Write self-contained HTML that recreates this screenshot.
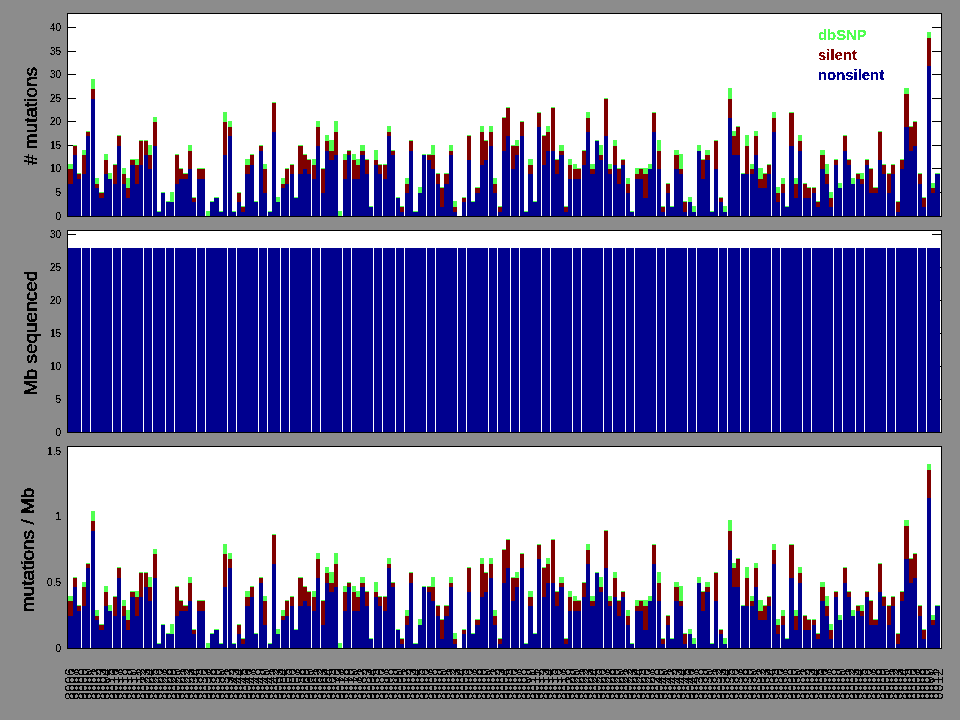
<!DOCTYPE html><html><head><meta charset="utf-8"><title>mutation rates</title><style>

html,body{margin:0;padding:0}
body{width:960px;height:720px;overflow:hidden;background:#8c8c8c;position:relative;font-family:"Liberation Sans",sans-serif;color:#000}
.yl{filter:url(#th)}
.lg{filter:url(#th3)}
.yt{filter:url(#th3)}
.xl span{filter:url(#th2)}
.yt{position:absolute;right:899px;font-size:10px;line-height:10px;height:10px;white-space:nowrap;text-align:right}
.yl{position:absolute;left:0;top:0;font-size:19px;line-height:19px;-webkit-text-stroke:0.15px #000;white-space:nowrap;transform-origin:0 0}
.lg{position:absolute;left:818px;font-size:15.5px;font-weight:bold;line-height:14px;white-space:nowrap;transform-origin:0 0;transform:scaleX(0.96)}
.xl{position:absolute;left:0;top:0;width:960px;height:720px}
.xl span{position:absolute;top:700px;font-size:14px;line-height:14px;height:14px;letter-spacing:0.213px;white-space:nowrap;transform-origin:0 0;transform:rotate(-90deg)}

</style></head><body>
<svg width="0" height="0" style="position:absolute"><filter id="th" x="-50%" y="-50%" width="200%" height="200%" color-interpolation-filters="sRGB"><feComponentTransfer><feFuncA type="discrete" tableValues="0 1 1"/></feComponentTransfer></filter><filter id="th2" x="-50%" y="-50%" width="200%" height="200%" color-interpolation-filters="sRGB"><feComponentTransfer><feFuncA type="discrete" tableValues="0 1"/></feComponentTransfer></filter><filter id="th3" x="-50%" y="-50%" width="200%" height="200%" color-interpolation-filters="sRGB"><feComponentTransfer><feFuncA type="discrete" tableValues="0 0 1 1 1"/></feComponentTransfer></filter></svg>
<svg width="960" height="720" viewBox="0 0 960 720" shape-rendering="crispEdges" style="position:absolute;left:0;top:0">
<rect x="67" y="13" width="875" height="204" fill="#fff"/>
<rect x="67" y="230" width="875" height="203" fill="#fff"/>
<rect x="67" y="446" width="875" height="203" fill="#fff"/>
<path fill="#000" d="M68 192h8v1h-8zM932 192h9v1h-9zM68 168h8v1h-8zM932 168h9v1h-9zM68 145h8v1h-8zM932 145h9v1h-9zM68 121h8v1h-8zM932 121h9v1h-9zM68 98h8v1h-8zM932 98h9v1h-9zM68 74h8v1h-8zM932 74h9v1h-9zM68 51h8v1h-8zM932 51h9v1h-9zM68 27h8v1h-8zM932 27h9v1h-9zM68 399h8v1h-8zM932 399h9v1h-9zM68 366h8v1h-8zM932 366h9v1h-9zM68 333h8v1h-8zM932 333h9v1h-9zM68 300h8v1h-8zM932 300h9v1h-9zM68 267h8v1h-8zM932 267h9v1h-9zM68 234h8v1h-8zM932 234h9v1h-9z"/>
<path fill="#00008f" d="M68 184h5v32h-5zM73 155h4v61h-4zM77 179h4v37h-4zM82 174h4v42h-4zM86 136h4v80h-4zM91 99h4v117h-4zM95 188h4v28h-4zM99 198h5v18h-5zM104 174h4v42h-4zM108 179h4v37h-4zM113 184h4v32h-4zM117 146h4v70h-4zM122 184h4v32h-4zM126 198h4v18h-4zM130 165h5v51h-5zM135 184h4v32h-4zM139 165h4v51h-4zM144 155h4v61h-4zM148 169h4v47h-4zM153 146h4v70h-4zM157 212h4v4h-4zM161 193h4v23h-4zM166 202h4v14h-4zM170 202h4v14h-4zM175 184h4v32h-4zM179 179h4v37h-4zM183 179h5v37h-5zM188 169h4v47h-4zM192 202h4v14h-4zM197 179h4v37h-4zM201 179h4v37h-4zM210 202h4v14h-4zM214 198h5v18h-5zM219 212h4v4h-4zM223 155h4v61h-4zM228 136h4v80h-4zM232 212h4v4h-4zM237 202h4v14h-4zM241 212h4v4h-4zM245 174h5v42h-5zM250 165h4v51h-4zM254 202h4v14h-4zM259 151h4v65h-4zM263 193h4v23h-4zM268 212h4v4h-4zM272 132h4v84h-4zM276 202h4v14h-4zM281 188h4v28h-4zM285 184h4v32h-4zM290 174h4v42h-4zM294 198h4v18h-4zM298 174h5v42h-5zM303 169h4v47h-4zM307 174h4v42h-4zM312 179h4v37h-4zM316 146h4v70h-4zM321 193h4v23h-4zM325 151h4v65h-4zM329 160h5v56h-5zM334 155h4v61h-4zM343 179h4v37h-4zM347 155h4v61h-4zM352 179h4v37h-4zM356 179h4v37h-4zM360 155h5v61h-5zM365 174h4v42h-4zM369 207h4v9h-4zM374 165h4v51h-4zM378 174h4v42h-4zM383 179h4v37h-4zM387 136h4v80h-4zM391 155h4v61h-4zM396 198h4v18h-4zM400 212h4v4h-4zM405 193h4v23h-4zM409 151h4v65h-4zM413 212h5v4h-5zM418 193h4v23h-4zM422 155h4v61h-4zM427 160h4v56h-4zM431 169h4v47h-4zM436 184h4v32h-4zM440 207h4v9h-4zM444 184h5v32h-5zM449 155h4v61h-4zM453 212h4v4h-4zM462 202h4v14h-4zM467 160h4v56h-4zM471 202h4v14h-4zM475 193h5v23h-5zM480 165h4v51h-4zM484 160h4v56h-4zM489 146h4v70h-4zM493 193h4v23h-4zM498 212h4v4h-4zM502 151h4v65h-4zM506 136h4v80h-4zM511 169h4v47h-4zM515 155h4v61h-4zM520 136h4v80h-4zM524 212h4v4h-4zM528 174h5v42h-5zM533 202h4v14h-4zM537 127h4v89h-4zM542 165h4v51h-4zM546 151h4v65h-4zM551 151h4v65h-4zM555 174h4v42h-4zM559 155h5v61h-5zM564 212h4v4h-4zM568 179h4v37h-4zM573 179h4v37h-4zM577 179h4v37h-4zM582 165h4v51h-4zM586 132h4v84h-4zM590 174h5v42h-5zM595 141h4v75h-4zM599 160h4v56h-4zM604 136h4v80h-4zM608 174h4v42h-4zM613 165h4v51h-4zM617 184h4v32h-4zM621 165h4v51h-4zM626 193h4v23h-4zM630 212h4v4h-4zM635 179h4v37h-4zM639 179h4v37h-4zM643 198h5v18h-5zM648 169h4v47h-4zM652 132h4v84h-4zM657 169h4v47h-4zM661 212h4v4h-4zM666 193h4v23h-4zM670 207h4v9h-4zM674 169h5v47h-5zM679 174h4v42h-4zM683 212h4v4h-4zM688 202h4v14h-4zM692 212h4v4h-4zM697 151h4v65h-4zM701 179h4v37h-4zM705 160h5v56h-5zM710 212h4v4h-4zM714 169h4v47h-4zM719 202h4v14h-4zM723 212h4v4h-4zM728 118h4v98h-4zM732 155h4v61h-4zM736 155h4v61h-4zM741 174h4v42h-4zM745 174h4v42h-4zM750 174h4v42h-4zM754 155h4v61h-4zM758 188h5v28h-5zM763 188h4v28h-4zM767 174h4v42h-4zM772 132h4v84h-4zM776 202h4v14h-4zM781 193h4v23h-4zM785 207h4v9h-4zM789 146h5v70h-5zM794 198h4v18h-4zM798 151h4v65h-4zM803 198h4v18h-4zM807 198h4v18h-4zM812 193h4v23h-4zM816 207h4v9h-4zM820 169h5v47h-5zM825 184h4v32h-4zM829 207h4v9h-4zM834 165h4v51h-4zM838 188h4v28h-4zM843 151h4v65h-4zM847 165h4v51h-4zM851 184h4v32h-4zM856 179h4v37h-4zM860 184h4v32h-4zM865 165h4v51h-4zM869 193h4v23h-4zM873 193h5v23h-5zM878 160h4v56h-4zM882 174h4v42h-4zM887 193h4v23h-4zM891 174h4v42h-4zM896 212h4v4h-4zM900 169h4v47h-4zM904 127h5v89h-5zM909 151h4v65h-4zM913 146h4v70h-4zM918 184h4v32h-4zM922 207h4v9h-4zM927 66h4v150h-4zM931 193h4v23h-4zM935 174h5v42h-5z"/>
<path fill="#800000" d="M68 169h5v15h-5zM73 146h4v9h-4zM77 174h4v5h-4zM82 155h4v19h-4zM86 132h4v4h-4zM91 89h4v10h-4zM95 184h4v4h-4zM99 193h5v5h-5zM104 160h4v14h-4zM113 165h4v19h-4zM117 136h4v10h-4zM122 174h4v10h-4zM126 188h4v10h-4zM130 160h5v5h-5zM135 165h4v19h-4zM139 141h4v24h-4zM144 141h4v14h-4zM148 155h4v14h-4zM153 122h4v24h-4zM175 155h4v29h-4zM179 169h4v10h-4zM183 174h5v5h-5zM188 151h4v18h-4zM192 198h4v4h-4zM197 169h4v10h-4zM201 169h4v10h-4zM223 122h4v33h-4zM228 127h4v9h-4zM237 193h4v9h-4zM241 207h4v5h-4zM245 165h5v9h-5zM250 155h4v10h-4zM259 146h4v5h-4zM263 169h4v24h-4zM272 103h4v29h-4zM281 184h4v4h-4zM285 169h4v15h-4zM290 165h4v9h-4zM298 146h5v28h-5zM303 155h4v14h-4zM307 160h4v14h-4zM312 165h4v14h-4zM316 127h4v19h-4zM321 169h4v24h-4zM325 141h4v10h-4zM329 151h5v9h-5zM334 132h4v23h-4zM343 160h4v19h-4zM347 151h4v4h-4zM352 160h4v19h-4zM356 165h4v14h-4zM360 151h5v4h-5zM365 160h4v14h-4zM374 160h4v5h-4zM378 165h4v9h-4zM383 165h4v14h-4zM387 132h4v4h-4zM391 151h4v4h-4zM400 207h4v5h-4zM405 184h4v9h-4zM409 141h4v10h-4zM427 155h4v5h-4zM431 155h4v14h-4zM436 174h4v10h-4zM440 188h4v19h-4zM444 174h5v10h-5zM449 151h4v4h-4zM453 207h4v5h-4zM462 198h4v4h-4zM467 136h4v24h-4zM475 188h5v5h-5zM480 132h4v33h-4zM484 141h4v19h-4zM489 132h4v14h-4zM493 184h4v9h-4zM498 207h4v5h-4zM502 118h4v33h-4zM506 108h4v28h-4zM511 146h4v23h-4zM515 146h4v9h-4zM520 122h4v14h-4zM528 165h5v9h-5zM537 113h4v14h-4zM542 136h4v29h-4zM546 132h4v19h-4zM551 108h4v43h-4zM555 160h4v14h-4zM559 151h5v4h-5zM564 207h4v5h-4zM568 165h4v14h-4zM573 169h4v10h-4zM577 169h4v10h-4zM582 151h4v14h-4zM586 118h4v14h-4zM590 169h5v5h-5zM599 155h4v5h-4zM604 99h4v37h-4zM608 169h4v5h-4zM613 146h4v19h-4zM617 169h4v15h-4zM621 160h4v5h-4zM626 184h4v9h-4zM635 174h4v5h-4zM639 169h4v10h-4zM643 174h5v24h-5zM652 113h4v19h-4zM657 151h4v18h-4zM661 207h4v5h-4zM666 184h4v9h-4zM674 155h5v14h-5zM679 169h4v5h-4zM683 202h4v10h-4zM701 160h4v19h-4zM705 155h5v5h-5zM714 141h4v28h-4zM719 198h4v4h-4zM728 99h4v19h-4zM732 136h4v19h-4zM736 127h4v28h-4zM745 146h4v28h-4zM750 169h4v5h-4zM754 136h4v19h-4zM758 179h5v9h-5zM763 174h4v14h-4zM767 165h4v9h-4zM772 118h4v14h-4zM776 193h4v9h-4zM781 184h4v9h-4zM789 113h5v33h-5zM794 184h4v14h-4zM798 141h4v10h-4zM803 184h4v14h-4zM807 188h4v10h-4zM812 188h4v5h-4zM816 202h4v5h-4zM820 155h5v14h-5zM825 174h4v10h-4zM829 198h4v9h-4zM834 160h4v5h-4zM843 136h4v15h-4zM847 160h4v5h-4zM856 174h4v5h-4zM860 179h4v5h-4zM865 160h4v5h-4zM869 169h4v24h-4zM873 188h5v5h-5zM878 132h4v28h-4zM882 165h4v9h-4zM887 174h4v19h-4zM891 165h4v9h-4zM896 202h4v10h-4zM900 160h4v9h-4zM904 94h5v33h-5zM909 127h4v24h-4zM913 122h4v24h-4zM918 174h4v10h-4zM922 198h4v9h-4zM927 38h4v28h-4zM931 188h4v5h-4z"/>
<path fill="#50ff50" d="M68 164h5v5h-5zM73 145h4v1h-4zM77 173h4v1h-4zM82 150h4v5h-4zM86 131h4v1h-4zM91 79h4v10h-4zM95 178h4v6h-4zM99 192h5v1h-5zM104 154h4v6h-4zM108 173h4v6h-4zM113 164h4v1h-4zM117 135h4v1h-4zM122 168h4v6h-4zM126 178h4v10h-4zM130 159h5v1h-5zM135 159h4v6h-4zM139 140h4v1h-4zM144 140h4v1h-4zM148 145h4v10h-4zM153 117h4v5h-4zM157 211h4v1h-4zM161 192h4v1h-4zM166 201h4v1h-4zM170 192h4v10h-4zM175 154h4v1h-4zM179 168h4v1h-4zM183 173h5v1h-5zM188 145h4v6h-4zM192 197h4v1h-4zM197 168h4v1h-4zM201 168h4v1h-4zM206 211h4v5h-4zM210 201h4v1h-4zM214 197h5v1h-5zM219 211h4v1h-4zM223 112h4v10h-4zM228 121h4v6h-4zM232 211h4v1h-4zM237 192h4v1h-4zM241 206h4v1h-4zM245 159h5v6h-5zM250 154h4v1h-4zM254 201h4v1h-4zM259 145h4v1h-4zM263 164h4v5h-4zM268 211h4v1h-4zM272 102h4v1h-4zM276 197h4v5h-4zM281 178h4v6h-4zM285 168h4v1h-4zM290 164h4v1h-4zM294 197h4v1h-4zM298 145h5v1h-5zM303 154h4v1h-4zM307 159h4v1h-4zM312 159h4v6h-4zM316 121h4v6h-4zM321 168h4v1h-4zM325 135h4v6h-4zM329 140h5v11h-5zM334 121h4v11h-4zM338 211h4v5h-4zM343 154h4v6h-4zM347 150h4v1h-4zM352 154h4v6h-4zM356 159h4v6h-4zM360 145h5v6h-5zM365 159h4v1h-4zM369 206h4v1h-4zM374 150h4v10h-4zM378 164h4v1h-4zM383 164h4v1h-4zM387 126h4v6h-4zM391 150h4v1h-4zM396 197h4v1h-4zM400 206h4v1h-4zM405 178h4v6h-4zM409 140h4v1h-4zM413 211h5v1h-5zM418 187h4v6h-4zM422 154h4v1h-4zM427 154h4v1h-4zM431 145h4v10h-4zM436 173h4v1h-4zM440 187h4v1h-4zM444 173h5v1h-5zM449 145h4v6h-4zM453 201h4v6h-4zM462 197h4v1h-4zM467 135h4v1h-4zM471 201h4v1h-4zM475 187h5v1h-5zM480 126h4v6h-4zM484 140h4v1h-4zM489 126h4v6h-4zM493 178h4v6h-4zM498 206h4v1h-4zM502 117h4v1h-4zM506 107h4v1h-4zM511 145h4v1h-4zM515 140h4v6h-4zM520 121h4v1h-4zM524 211h4v1h-4zM528 159h5v6h-5zM533 201h4v1h-4zM537 112h4v1h-4zM542 135h4v1h-4zM546 126h4v6h-4zM551 107h4v1h-4zM555 159h4v1h-4zM559 145h5v6h-5zM564 206h4v1h-4zM568 159h4v6h-4zM573 164h4v5h-4zM577 168h4v1h-4zM582 150h4v1h-4zM586 112h4v6h-4zM590 164h5v5h-5zM595 140h4v1h-4zM599 145h4v10h-4zM604 98h4v1h-4zM608 164h4v5h-4zM613 140h4v6h-4zM617 168h4v1h-4zM621 159h4v1h-4zM626 178h4v6h-4zM630 211h4v1h-4zM635 168h4v6h-4zM639 168h4v1h-4zM643 168h5v6h-5zM648 164h4v5h-4zM652 112h4v1h-4zM657 140h4v11h-4zM661 206h4v1h-4zM666 183h4v1h-4zM670 206h4v1h-4zM674 150h5v5h-5zM679 154h4v15h-4zM683 201h4v1h-4zM688 197h4v5h-4zM692 206h4v6h-4zM697 145h4v6h-4zM701 159h4v1h-4zM705 150h5v5h-5zM710 211h4v1h-4zM714 140h4v1h-4zM719 197h4v1h-4zM723 206h4v6h-4zM728 88h4v11h-4zM732 131h4v5h-4zM736 126h4v1h-4zM741 173h4v1h-4zM745 135h4v11h-4zM750 164h4v5h-4zM754 131h4v5h-4zM758 168h5v11h-5zM763 173h4v1h-4zM767 164h4v1h-4zM772 112h4v6h-4zM776 187h4v6h-4zM781 178h4v6h-4zM785 206h4v1h-4zM789 112h5v1h-5zM794 178h4v6h-4zM798 135h4v6h-4zM803 183h4v1h-4zM807 187h4v1h-4zM812 187h4v1h-4zM816 201h4v1h-4zM820 150h5v5h-5zM825 164h4v10h-4zM829 192h4v6h-4zM834 159h4v1h-4zM838 183h4v5h-4zM843 135h4v1h-4zM847 159h4v1h-4zM851 178h4v6h-4zM856 173h4v1h-4zM860 173h4v6h-4zM865 159h4v1h-4zM869 168h4v1h-4zM873 187h5v1h-5zM878 131h4v1h-4zM882 164h4v1h-4zM887 173h4v1h-4zM891 164h4v1h-4zM896 201h4v1h-4zM900 159h4v1h-4zM904 88h5v6h-5zM909 126h4v1h-4zM913 121h4v1h-4zM918 173h4v1h-4zM922 197h4v1h-4zM927 32h4v6h-4zM931 183h4v5h-4zM935 173h5v1h-5z"/>
<path fill="#00008f" d="M68 616h5v32h-5zM73 587h4v61h-4zM77 611h4v37h-4zM82 606h4v42h-4zM86 568h4v80h-4zM91 531h4v117h-4zM95 620h4v28h-4zM99 630h5v18h-5zM104 606h4v42h-4zM108 611h4v37h-4zM113 616h4v32h-4zM117 578h4v70h-4zM122 616h4v32h-4zM126 630h4v18h-4zM130 597h5v51h-5zM135 616h4v32h-4zM139 597h4v51h-4zM144 587h4v61h-4zM148 601h4v47h-4zM153 578h4v70h-4zM157 644h4v4h-4zM161 625h4v23h-4zM166 634h4v14h-4zM170 634h4v14h-4zM175 616h4v32h-4zM179 611h4v37h-4zM183 611h5v37h-5zM188 601h4v47h-4zM192 634h4v14h-4zM197 611h4v37h-4zM201 611h4v37h-4zM210 634h4v14h-4zM214 630h5v18h-5zM219 644h4v4h-4zM223 587h4v61h-4zM228 568h4v80h-4zM232 644h4v4h-4zM237 634h4v14h-4zM241 644h4v4h-4zM245 606h5v42h-5zM250 597h4v51h-4zM254 634h4v14h-4zM259 583h4v65h-4zM263 625h4v23h-4zM268 644h4v4h-4zM272 564h4v84h-4zM276 634h4v14h-4zM281 620h4v28h-4zM285 616h4v32h-4zM290 606h4v42h-4zM294 630h4v18h-4zM298 606h5v42h-5zM303 601h4v47h-4zM307 606h4v42h-4zM312 611h4v37h-4zM316 578h4v70h-4zM321 625h4v23h-4zM325 583h4v65h-4zM329 592h5v56h-5zM334 587h4v61h-4zM343 611h4v37h-4zM347 587h4v61h-4zM352 611h4v37h-4zM356 611h4v37h-4zM360 587h5v61h-5zM365 606h4v42h-4zM369 639h4v9h-4zM374 597h4v51h-4zM378 606h4v42h-4zM383 611h4v37h-4zM387 568h4v80h-4zM391 587h4v61h-4zM396 630h4v18h-4zM400 644h4v4h-4zM405 625h4v23h-4zM409 583h4v65h-4zM413 644h5v4h-5zM418 625h4v23h-4zM422 587h4v61h-4zM427 592h4v56h-4zM431 601h4v47h-4zM436 616h4v32h-4zM440 639h4v9h-4zM444 616h5v32h-5zM449 587h4v61h-4zM453 644h4v4h-4zM462 634h4v14h-4zM467 592h4v56h-4zM471 634h4v14h-4zM475 625h5v23h-5zM480 597h4v51h-4zM484 592h4v56h-4zM489 578h4v70h-4zM493 625h4v23h-4zM498 644h4v4h-4zM502 583h4v65h-4zM506 568h4v80h-4zM511 601h4v47h-4zM515 587h4v61h-4zM520 568h4v80h-4zM524 644h4v4h-4zM528 606h5v42h-5zM533 634h4v14h-4zM537 559h4v89h-4zM542 597h4v51h-4zM546 583h4v65h-4zM551 583h4v65h-4zM555 606h4v42h-4zM559 587h5v61h-5zM564 644h4v4h-4zM568 611h4v37h-4zM573 611h4v37h-4zM577 611h4v37h-4zM582 597h4v51h-4zM586 564h4v84h-4zM590 606h5v42h-5zM595 573h4v75h-4zM599 592h4v56h-4zM604 568h4v80h-4zM608 606h4v42h-4zM613 597h4v51h-4zM617 616h4v32h-4zM621 597h4v51h-4zM626 625h4v23h-4zM630 644h4v4h-4zM635 611h4v37h-4zM639 611h4v37h-4zM643 630h5v18h-5zM648 601h4v47h-4zM652 564h4v84h-4zM657 601h4v47h-4zM661 644h4v4h-4zM666 625h4v23h-4zM670 639h4v9h-4zM674 601h5v47h-5zM679 606h4v42h-4zM683 644h4v4h-4zM688 634h4v14h-4zM692 644h4v4h-4zM697 583h4v65h-4zM701 611h4v37h-4zM705 592h5v56h-5zM710 644h4v4h-4zM714 601h4v47h-4zM719 634h4v14h-4zM723 644h4v4h-4zM728 550h4v98h-4zM732 587h4v61h-4zM736 587h4v61h-4zM741 606h4v42h-4zM745 606h4v42h-4zM750 606h4v42h-4zM754 587h4v61h-4zM758 620h5v28h-5zM763 620h4v28h-4zM767 606h4v42h-4zM772 564h4v84h-4zM776 634h4v14h-4zM781 625h4v23h-4zM785 639h4v9h-4zM789 578h5v70h-5zM794 630h4v18h-4zM798 583h4v65h-4zM803 630h4v18h-4zM807 630h4v18h-4zM812 625h4v23h-4zM816 639h4v9h-4zM820 601h5v47h-5zM825 616h4v32h-4zM829 639h4v9h-4zM834 597h4v51h-4zM838 620h4v28h-4zM843 583h4v65h-4zM847 597h4v51h-4zM851 616h4v32h-4zM856 611h4v37h-4zM860 616h4v32h-4zM865 597h4v51h-4zM869 625h4v23h-4zM873 625h5v23h-5zM878 592h4v56h-4zM882 606h4v42h-4zM887 625h4v23h-4zM891 606h4v42h-4zM896 644h4v4h-4zM900 601h4v47h-4zM904 559h5v89h-5zM909 583h4v65h-4zM913 578h4v70h-4zM918 616h4v32h-4zM922 639h4v9h-4zM927 498h4v150h-4zM931 625h4v23h-4zM935 606h5v42h-5z"/>
<path fill="#800000" d="M68 601h5v15h-5zM73 578h4v9h-4zM77 606h4v5h-4zM82 587h4v19h-4zM86 564h4v4h-4zM91 521h4v10h-4zM95 616h4v4h-4zM99 625h5v5h-5zM104 592h4v14h-4zM113 597h4v19h-4zM117 568h4v10h-4zM122 606h4v10h-4zM126 620h4v10h-4zM130 592h5v5h-5zM135 597h4v19h-4zM139 573h4v24h-4zM144 573h4v14h-4zM148 587h4v14h-4zM153 554h4v24h-4zM175 587h4v29h-4zM179 601h4v10h-4zM183 606h5v5h-5zM188 583h4v18h-4zM192 630h4v4h-4zM197 601h4v10h-4zM201 601h4v10h-4zM223 554h4v33h-4zM228 559h4v9h-4zM237 625h4v9h-4zM241 639h4v5h-4zM245 597h5v9h-5zM250 587h4v10h-4zM259 578h4v5h-4zM263 601h4v24h-4zM272 535h4v29h-4zM281 616h4v4h-4zM285 601h4v15h-4zM290 597h4v9h-4zM298 578h5v28h-5zM303 587h4v14h-4zM307 592h4v14h-4zM312 597h4v14h-4zM316 559h4v19h-4zM321 601h4v24h-4zM325 573h4v10h-4zM329 583h5v9h-5zM334 564h4v23h-4zM343 592h4v19h-4zM347 583h4v4h-4zM352 592h4v19h-4zM356 597h4v14h-4zM360 583h5v4h-5zM365 592h4v14h-4zM374 592h4v5h-4zM378 597h4v9h-4zM383 597h4v14h-4zM387 564h4v4h-4zM391 583h4v4h-4zM400 639h4v5h-4zM405 616h4v9h-4zM409 573h4v10h-4zM427 587h4v5h-4zM431 587h4v14h-4zM436 606h4v10h-4zM440 620h4v19h-4zM444 606h5v10h-5zM449 583h4v4h-4zM453 639h4v5h-4zM462 630h4v4h-4zM467 568h4v24h-4zM475 620h5v5h-5zM480 564h4v33h-4zM484 573h4v19h-4zM489 564h4v14h-4zM493 616h4v9h-4zM498 639h4v5h-4zM502 550h4v33h-4zM506 540h4v28h-4zM511 578h4v23h-4zM515 578h4v9h-4zM520 554h4v14h-4zM528 597h5v9h-5zM537 545h4v14h-4zM542 568h4v29h-4zM546 564h4v19h-4zM551 540h4v43h-4zM555 592h4v14h-4zM559 583h5v4h-5zM564 639h4v5h-4zM568 597h4v14h-4zM573 601h4v10h-4zM577 601h4v10h-4zM582 583h4v14h-4zM586 550h4v14h-4zM590 601h5v5h-5zM599 587h4v5h-4zM604 531h4v37h-4zM608 601h4v5h-4zM613 578h4v19h-4zM617 601h4v15h-4zM621 592h4v5h-4zM626 616h4v9h-4zM635 606h4v5h-4zM639 601h4v10h-4zM643 606h5v24h-5zM652 545h4v19h-4zM657 583h4v18h-4zM661 639h4v5h-4zM666 616h4v9h-4zM674 587h5v14h-5zM679 601h4v5h-4zM683 634h4v10h-4zM701 592h4v19h-4zM705 587h5v5h-5zM714 573h4v28h-4zM719 630h4v4h-4zM728 531h4v19h-4zM732 568h4v19h-4zM736 559h4v28h-4zM745 578h4v28h-4zM750 601h4v5h-4zM754 568h4v19h-4zM758 611h5v9h-5zM763 606h4v14h-4zM767 597h4v9h-4zM772 550h4v14h-4zM776 625h4v9h-4zM781 616h4v9h-4zM789 545h5v33h-5zM794 616h4v14h-4zM798 573h4v10h-4zM803 616h4v14h-4zM807 620h4v10h-4zM812 620h4v5h-4zM816 634h4v5h-4zM820 587h5v14h-5zM825 606h4v10h-4zM829 630h4v9h-4zM834 592h4v5h-4zM843 568h4v15h-4zM847 592h4v5h-4zM856 606h4v5h-4zM860 611h4v5h-4zM865 592h4v5h-4zM869 601h4v24h-4zM873 620h5v5h-5zM878 564h4v28h-4zM882 597h4v9h-4zM887 606h4v19h-4zM891 597h4v9h-4zM896 634h4v10h-4zM900 592h4v9h-4zM904 526h5v33h-5zM909 559h4v24h-4zM913 554h4v24h-4zM918 606h4v10h-4zM922 630h4v9h-4zM927 470h4v28h-4zM931 620h4v5h-4z"/>
<path fill="#50ff50" d="M68 596h5v5h-5zM73 577h4v1h-4zM77 605h4v1h-4zM82 582h4v5h-4zM86 563h4v1h-4zM91 511h4v10h-4zM95 610h4v6h-4zM99 624h5v1h-5zM104 586h4v6h-4zM108 605h4v6h-4zM113 596h4v1h-4zM117 567h4v1h-4zM122 600h4v6h-4zM126 610h4v10h-4zM130 591h5v1h-5zM135 591h4v6h-4zM139 572h4v1h-4zM144 572h4v1h-4zM148 577h4v10h-4zM153 549h4v5h-4zM157 643h4v1h-4zM161 624h4v1h-4zM166 633h4v1h-4zM170 624h4v10h-4zM175 586h4v1h-4zM179 600h4v1h-4zM183 605h5v1h-5zM188 577h4v6h-4zM192 629h4v1h-4zM197 600h4v1h-4zM201 600h4v1h-4zM206 643h4v5h-4zM210 633h4v1h-4zM214 629h5v1h-5zM219 643h4v1h-4zM223 544h4v10h-4zM228 553h4v6h-4zM232 643h4v1h-4zM237 624h4v1h-4zM241 638h4v1h-4zM245 591h5v6h-5zM250 586h4v1h-4zM254 633h4v1h-4zM259 577h4v1h-4zM263 596h4v5h-4zM268 643h4v1h-4zM272 534h4v1h-4zM276 629h4v5h-4zM281 610h4v6h-4zM285 600h4v1h-4zM290 596h4v1h-4zM294 629h4v1h-4zM298 577h5v1h-5zM303 586h4v1h-4zM307 591h4v1h-4zM312 591h4v6h-4zM316 553h4v6h-4zM321 600h4v1h-4zM325 567h4v6h-4zM329 572h5v11h-5zM334 553h4v11h-4zM338 643h4v5h-4zM343 586h4v6h-4zM347 582h4v1h-4zM352 586h4v6h-4zM356 591h4v6h-4zM360 577h5v6h-5zM365 591h4v1h-4zM369 638h4v1h-4zM374 582h4v10h-4zM378 596h4v1h-4zM383 596h4v1h-4zM387 558h4v6h-4zM391 582h4v1h-4zM396 629h4v1h-4zM400 638h4v1h-4zM405 610h4v6h-4zM409 572h4v1h-4zM413 643h5v1h-5zM418 619h4v6h-4zM422 586h4v1h-4zM427 586h4v1h-4zM431 577h4v10h-4zM436 605h4v1h-4zM440 619h4v1h-4zM444 605h5v1h-5zM449 577h4v6h-4zM453 633h4v6h-4zM462 629h4v1h-4zM467 567h4v1h-4zM471 633h4v1h-4zM475 619h5v1h-5zM480 558h4v6h-4zM484 572h4v1h-4zM489 558h4v6h-4zM493 610h4v6h-4zM498 638h4v1h-4zM502 549h4v1h-4zM506 539h4v1h-4zM511 577h4v1h-4zM515 572h4v6h-4zM520 553h4v1h-4zM524 643h4v1h-4zM528 591h5v6h-5zM533 633h4v1h-4zM537 544h4v1h-4zM542 567h4v1h-4zM546 558h4v6h-4zM551 539h4v1h-4zM555 591h4v1h-4zM559 577h5v6h-5zM564 638h4v1h-4zM568 591h4v6h-4zM573 596h4v5h-4zM577 600h4v1h-4zM582 582h4v1h-4zM586 544h4v6h-4zM590 596h5v5h-5zM595 572h4v1h-4zM599 577h4v10h-4zM604 530h4v1h-4zM608 596h4v5h-4zM613 572h4v6h-4zM617 600h4v1h-4zM621 591h4v1h-4zM626 610h4v6h-4zM630 643h4v1h-4zM635 600h4v6h-4zM639 600h4v1h-4zM643 600h5v6h-5zM648 596h4v5h-4zM652 544h4v1h-4zM657 572h4v11h-4zM661 638h4v1h-4zM666 615h4v1h-4zM670 638h4v1h-4zM674 582h5v5h-5zM679 586h4v15h-4zM683 633h4v1h-4zM688 629h4v5h-4zM692 638h4v6h-4zM697 577h4v6h-4zM701 591h4v1h-4zM705 582h5v5h-5zM710 643h4v1h-4zM714 572h4v1h-4zM719 629h4v1h-4zM723 638h4v6h-4zM728 520h4v11h-4zM732 563h4v5h-4zM736 558h4v1h-4zM741 605h4v1h-4zM745 567h4v11h-4zM750 596h4v5h-4zM754 563h4v5h-4zM758 600h5v11h-5zM763 605h4v1h-4zM767 596h4v1h-4zM772 544h4v6h-4zM776 619h4v6h-4zM781 610h4v6h-4zM785 638h4v1h-4zM789 544h5v1h-5zM794 610h4v6h-4zM798 567h4v6h-4zM803 615h4v1h-4zM807 619h4v1h-4zM812 619h4v1h-4zM816 633h4v1h-4zM820 582h5v5h-5zM825 596h4v10h-4zM829 624h4v6h-4zM834 591h4v1h-4zM838 615h4v5h-4zM843 567h4v1h-4zM847 591h4v1h-4zM851 610h4v6h-4zM856 605h4v1h-4zM860 605h4v6h-4zM865 591h4v1h-4zM869 600h4v1h-4zM873 619h5v1h-5zM878 563h4v1h-4zM882 596h4v1h-4zM887 605h4v1h-4zM891 596h4v1h-4zM896 633h4v1h-4zM900 591h4v1h-4zM904 520h5v6h-5zM909 558h4v1h-4zM913 553h4v1h-4zM918 605h4v1h-4zM922 629h4v1h-4zM927 464h4v6h-4zM931 615h4v5h-4zM935 605h5v1h-5z"/>
<path fill="#00008f" d="M68 248h5v184h-5zM73 248h4v184h-4zM77 248h4v184h-4zM82 248h4v184h-4zM86 248h4v184h-4zM91 248h4v184h-4zM95 248h4v184h-4zM99 248h5v184h-5zM104 248h4v184h-4zM108 248h4v184h-4zM113 248h4v184h-4zM117 248h4v184h-4zM122 248h4v184h-4zM126 248h4v184h-4zM130 248h5v184h-5zM135 248h4v184h-4zM139 248h4v184h-4zM144 248h4v184h-4zM148 248h4v184h-4zM153 248h4v184h-4zM157 248h4v184h-4zM161 248h4v184h-4zM166 248h4v184h-4zM170 248h4v184h-4zM175 248h4v184h-4zM179 248h4v184h-4zM183 248h5v184h-5zM188 248h4v184h-4zM192 248h4v184h-4zM197 248h4v184h-4zM201 248h4v184h-4zM206 248h4v184h-4zM210 248h4v184h-4zM214 248h5v184h-5zM219 248h4v184h-4zM223 248h4v184h-4zM228 248h4v184h-4zM232 248h4v184h-4zM237 248h4v184h-4zM241 248h4v184h-4zM245 248h5v184h-5zM250 248h4v184h-4zM254 248h4v184h-4zM259 248h4v184h-4zM263 248h4v184h-4zM268 248h4v184h-4zM272 248h4v184h-4zM276 248h4v184h-4zM281 248h4v184h-4zM285 248h4v184h-4zM290 248h4v184h-4zM294 248h4v184h-4zM298 248h5v184h-5zM303 248h4v184h-4zM307 248h4v184h-4zM312 248h4v184h-4zM316 248h4v184h-4zM321 248h4v184h-4zM325 248h4v184h-4zM329 248h5v184h-5zM334 248h4v184h-4zM338 248h4v184h-4zM343 248h4v184h-4zM347 248h4v184h-4zM352 248h4v184h-4zM356 248h4v184h-4zM360 248h5v184h-5zM365 248h4v184h-4zM369 248h4v184h-4zM374 248h4v184h-4zM378 248h4v184h-4zM383 248h4v184h-4zM387 248h4v184h-4zM391 248h4v184h-4zM396 248h4v184h-4zM400 248h4v184h-4zM405 248h4v184h-4zM409 248h4v184h-4zM413 248h5v184h-5zM418 248h4v184h-4zM422 248h4v184h-4zM427 248h4v184h-4zM431 248h4v184h-4zM436 248h4v184h-4zM440 248h4v184h-4zM444 248h5v184h-5zM449 248h4v184h-4zM453 248h4v184h-4zM458 248h4v184h-4zM462 248h4v184h-4zM467 248h4v184h-4zM471 248h4v184h-4zM475 248h5v184h-5zM480 248h4v184h-4zM484 248h4v184h-4zM489 248h4v184h-4zM493 248h4v184h-4zM498 248h4v184h-4zM502 248h4v184h-4zM506 248h4v184h-4zM511 248h4v184h-4zM515 248h4v184h-4zM520 248h4v184h-4zM524 248h4v184h-4zM528 248h5v184h-5zM533 248h4v184h-4zM537 248h4v184h-4zM542 248h4v184h-4zM546 248h4v184h-4zM551 248h4v184h-4zM555 248h4v184h-4zM559 248h5v184h-5zM564 248h4v184h-4zM568 248h4v184h-4zM573 248h4v184h-4zM577 248h4v184h-4zM582 248h4v184h-4zM586 248h4v184h-4zM590 248h5v184h-5zM595 248h4v184h-4zM599 248h4v184h-4zM604 248h4v184h-4zM608 248h4v184h-4zM613 248h4v184h-4zM617 248h4v184h-4zM621 248h4v184h-4zM626 248h4v184h-4zM630 248h4v184h-4zM635 248h4v184h-4zM639 248h4v184h-4zM643 248h5v184h-5zM648 248h4v184h-4zM652 248h4v184h-4zM657 248h4v184h-4zM661 248h4v184h-4zM666 248h4v184h-4zM670 248h4v184h-4zM674 248h5v184h-5zM679 248h4v184h-4zM683 248h4v184h-4zM688 248h4v184h-4zM692 248h4v184h-4zM697 248h4v184h-4zM701 248h4v184h-4zM705 248h5v184h-5zM710 248h4v184h-4zM714 248h4v184h-4zM719 248h4v184h-4zM723 248h4v184h-4zM728 248h4v184h-4zM732 248h4v184h-4zM736 248h4v184h-4zM741 248h4v184h-4zM745 248h4v184h-4zM750 248h4v184h-4zM754 248h4v184h-4zM758 248h5v184h-5zM763 248h4v184h-4zM767 248h4v184h-4zM772 248h4v184h-4zM776 248h4v184h-4zM781 248h4v184h-4zM785 248h4v184h-4zM789 248h5v184h-5zM794 248h4v184h-4zM798 248h4v184h-4zM803 248h4v184h-4zM807 248h4v184h-4zM812 248h4v184h-4zM816 248h4v184h-4zM820 248h5v184h-5zM825 248h4v184h-4zM829 248h4v184h-4zM834 248h4v184h-4zM838 248h4v184h-4zM843 248h4v184h-4zM847 248h4v184h-4zM851 248h4v184h-4zM856 248h4v184h-4zM860 248h4v184h-4zM865 248h4v184h-4zM869 248h4v184h-4zM873 248h5v184h-5zM878 248h4v184h-4zM882 248h4v184h-4zM887 248h4v184h-4zM891 248h4v184h-4zM896 248h4v184h-4zM900 248h4v184h-4zM904 248h5v184h-5zM909 248h4v184h-4zM913 248h4v184h-4zM918 248h4v184h-4zM922 248h4v184h-4zM927 248h4v184h-4zM931 248h4v184h-4zM935 248h5v184h-5z"/>
<path fill="#000" d="M67 13h875v1h-875z M67 216h875v1h-875z M67 13h1v204h-1z M941 13h1v204h-1zM67 230h875v1h-875z M67 432h875v1h-875z M67 230h1v203h-1z M941 230h1v203h-1zM67 446h875v1h-875z M67 648h875v1h-875z M67 446h1v203h-1z M941 446h1v203h-1z"/>
</svg>
<div class="yt" style="top:212px">0</div>
<div class="yt" style="top:188px">5</div>
<div class="yt" style="top:164px">10</div>
<div class="yt" style="top:141px">15</div>
<div class="yt" style="top:117px">20</div>
<div class="yt" style="top:94px">25</div>
<div class="yt" style="top:70px">30</div>
<div class="yt" style="top:47px">35</div>
<div class="yt" style="top:23px">40</div>
<div class="yt" style="top:428px">0</div>
<div class="yt" style="top:395px">5</div>
<div class="yt" style="top:362px">10</div>
<div class="yt" style="top:329px">15</div>
<div class="yt" style="top:296px">20</div>
<div class="yt" style="top:263px">25</div>
<div class="yt" style="top:230px">30</div>
<div class="yt" style="top:644px">0</div>
<div class="yt" style="top:578px">0.5</div>
<div class="yt" style="top:512px">1</div>
<div class="yt" style="top:447px">1.5</div>
<div class="yl" style="transform:translate(21px,116px) rotate(-90deg) translateX(-50%)"># mutations</div>
<div class="yl" style="transform:translate(21px,333px) rotate(-90deg) translateX(-50%)">Mb sequenced</div>
<div class="yl" style="transform:translate(18px,550px) rotate(-90deg) translateX(-50%)">mutations / Mb</div>
<div class="lg" style="top:28px;color:#50ff50">dbSNP</div>
<div class="lg" style="top:48px;color:#800000">silent</div>
<div class="lg" style="top:68px;color:#00008f">nonsilent</div>
<div class="xl"><span style="left:62.70px">8006</span><span style="left:67.13px">8007</span><span style="left:71.56px">8008</span><span style="left:75.99px">8009</span><span style="left:80.42px">8000</span><span style="left:84.86px">8001</span><span style="left:89.29px">8002</span><span style="left:93.72px">8003</span><span style="left:98.15px">8004</span><span style="left:102.58px">8015</span><span style="left:107.01px">8016</span><span style="left:111.44px">8017</span><span style="left:115.87px">8018</span><span style="left:120.30px">8019</span><span style="left:124.73px">8010</span><span style="left:129.17px">8011</span><span style="left:133.60px">8012</span><span style="left:138.03px">8023</span><span style="left:142.46px">8024</span><span style="left:146.89px">8025</span><span style="left:151.32px">8026</span><span style="left:155.75px">8027</span><span style="left:160.18px">8028</span><span style="left:164.61px">8029</span><span style="left:169.04px">8020</span><span style="left:173.48px">8021</span><span style="left:177.91px">8022</span><span style="left:182.34px">8023</span><span style="left:186.77px">8034</span><span style="left:191.20px">8035</span><span style="left:195.63px">8036</span><span style="left:200.06px">8037</span><span style="left:204.49px">8038</span><span style="left:208.92px">8039</span><span style="left:213.35px">8030</span><span style="left:217.79px">8031</span><span style="left:222.22px">8032</span><span style="left:226.65px">8043</span><span style="left:231.08px">8044</span><span style="left:235.51px">8045</span><span style="left:239.94px">8046</span><span style="left:244.37px">8047</span><span style="left:248.80px">8048</span><span style="left:253.23px">8049</span><span style="left:257.66px">8040</span><span style="left:262.10px">8041</span><span style="left:266.53px">8042</span><span style="left:270.96px">8053</span><span style="left:275.39px">8054</span><span style="left:279.82px">8055</span><span style="left:284.25px">8056</span><span style="left:288.68px">8057</span><span style="left:293.11px">8058</span><span style="left:297.54px">8069</span><span style="left:301.97px">8060</span><span style="left:306.41px">8061</span><span style="left:310.84px">8062</span><span style="left:315.27px">8063</span><span style="left:319.70px">8064</span><span style="left:324.13px">8065</span><span style="left:328.56px">8076</span><span style="left:332.99px">8077</span><span style="left:337.42px">8078</span><span style="left:341.85px">8079</span><span style="left:346.28px">8070</span><span style="left:350.71px">8071</span><span style="left:355.15px">8082</span><span style="left:359.58px">8083</span><span style="left:364.01px">8084</span><span style="left:368.44px">8085</span><span style="left:372.87px">8086</span><span style="left:377.30px">8097</span><span style="left:381.73px">8098</span><span style="left:386.16px">8099</span><span style="left:390.59px">8090</span><span style="left:395.02px">8001</span><span style="left:399.46px">8002</span><span style="left:403.89px">8003</span><span style="left:408.32px">8004</span><span style="left:412.75px">8005</span><span style="left:417.18px">8006</span><span style="left:421.61px">8007</span><span style="left:426.04px">8008</span><span style="left:430.47px">8009</span><span style="left:434.90px">8000</span><span style="left:439.33px">8001</span><span style="left:443.77px">8002</span><span style="left:448.20px">8003</span><span style="left:452.63px">8004</span><span style="left:457.06px">8005</span><span style="left:461.49px">8006</span><span style="left:465.92px">8007</span><span style="left:470.35px">8008</span><span style="left:474.78px">8009</span><span style="left:479.21px">8000</span><span style="left:483.64px">8001</span><span style="left:488.08px">8002</span><span style="left:492.51px">8003</span><span style="left:496.94px">8004</span><span style="left:501.37px">8005</span><span style="left:505.80px">8006</span><span style="left:510.23px">8007</span><span style="left:514.66px">8008</span><span style="left:519.09px">8009</span><span style="left:523.52px">8010</span><span style="left:527.96px">8011</span><span style="left:532.39px">8012</span><span style="left:536.82px">8013</span><span style="left:541.25px">8014</span><span style="left:545.68px">8015</span><span style="left:550.11px">8016</span><span style="left:554.54px">8017</span><span style="left:558.97px">8018</span><span style="left:563.40px">8029</span><span style="left:567.83px">8020</span><span style="left:572.26px">8021</span><span style="left:576.70px">8022</span><span style="left:581.13px">8023</span><span style="left:585.56px">8024</span><span style="left:589.99px">8025</span><span style="left:594.42px">8026</span><span style="left:598.85px">8027</span><span style="left:603.28px">8028</span><span style="left:607.71px">8029</span><span style="left:612.14px">8020</span><span style="left:616.58px">8021</span><span style="left:621.01px">8022</span><span style="left:625.44px">8023</span><span style="left:629.87px">8024</span><span style="left:634.30px">8025</span><span style="left:638.73px">8026</span><span style="left:643.16px">8027</span><span style="left:647.59px">8028</span><span style="left:652.02px">8049</span><span style="left:656.45px">8040</span><span style="left:660.89px">8041</span><span style="left:665.32px">8042</span><span style="left:669.75px">8043</span><span style="left:674.18px">8044</span><span style="left:678.61px">8045</span><span style="left:683.04px">8046</span><span style="left:687.47px">8047</span><span style="left:691.90px">8038</span><span style="left:696.33px">8039</span><span style="left:700.76px">8030</span><span style="left:705.20px">8031</span><span style="left:709.63px">8032</span><span style="left:714.06px">8033</span><span style="left:718.49px">8034</span><span style="left:722.92px">8035</span><span style="left:727.35px">8036</span><span style="left:731.78px">8037</span><span style="left:736.21px">8038</span><span style="left:740.64px">8039</span><span style="left:745.07px">8030</span><span style="left:749.51px">8031</span><span style="left:753.94px">8082</span><span style="left:758.37px">8083</span><span style="left:762.80px">8084</span><span style="left:767.23px">8085</span><span style="left:771.66px">8086</span><span style="left:776.09px">8087</span><span style="left:780.52px">8088</span><span style="left:784.95px">8089</span><span style="left:789.38px">8080</span><span style="left:793.82px">8081</span><span style="left:798.25px">8002</span><span style="left:802.68px">8003</span><span style="left:807.11px">8004</span><span style="left:811.54px">8005</span><span style="left:815.97px">8006</span><span style="left:820.40px">8007</span><span style="left:824.83px">8008</span><span style="left:829.26px">8009</span><span style="left:833.69px">8000</span><span style="left:838.12px">8001</span><span style="left:842.56px">8002</span><span style="left:846.99px">8003</span><span style="left:851.42px">8004</span><span style="left:855.85px">8005</span><span style="left:860.28px">8006</span><span style="left:864.71px">8007</span><span style="left:869.14px">8008</span><span style="left:873.57px">8009</span><span style="left:878.00px">8000</span><span style="left:882.44px">8001</span><span style="left:886.87px">8002</span><span style="left:891.30px">8003</span><span style="left:895.73px">8004</span><span style="left:900.16px">8005</span><span style="left:904.59px">0006</span><span style="left:909.02px">0007</span><span style="left:913.45px">0008</span><span style="left:917.88px">0009</span><span style="left:922.31px">0000</span><span style="left:926.75px">0011</span><span style="left:931.18px">0012</span></div>
</body></html>
